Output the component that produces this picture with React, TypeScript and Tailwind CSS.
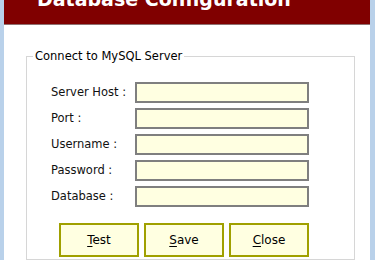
import { useState } from "react";

const fields = [
  { key: "host", label: "Server Host :" },
  { key: "port", label: "Port :" },
  { key: "user", label: "Username :" },
  { key: "pass", label: "Password :" },
  { key: "db", label: "Database :" },
];

const buttons = [
  { key: "test", first: "T", rest: "est" },
  { key: "save", first: "S", rest: "ave" },
  { key: "close", first: "C", rest: "lose" },
];

export default function App() {
  const [values, setValues] = useState<Record<string, string>>({});

  return (
    <div className="flex h-[260px] w-[375px] overflow-hidden bg-white font-['DejaVu_Sans',sans-serif]">
      <div className="w-[4px] shrink-0 bg-[#b9d1ea]" />

      <div className="flex flex-1 flex-col overflow-hidden bg-white">
        {/* header */}
        <div className="h-[25px] shrink-0 overflow-hidden border-b border-[#8f7070] bg-[#800000]">
          <h1 className="ml-[33px] mt-[-10px] whitespace-nowrap text-[19px] font-bold leading-none text-white">
            Database Configuration
          </h1>
        </div>

        {/* form */}
        <fieldset className="ml-[22px] mt-[24px] w-[329px] flex-1 border border-[#d6d6d6] p-0">
          <legend className="ml-[6px] px-[2px] text-[11.5px] leading-[14px] text-black">
            Connect to MySQL Server
          </legend>

          <div className="pl-[24px] pt-[19px]">
            <div className="grid grid-cols-[84px_174px] items-center gap-y-[5px]">
              {fields.map((f) => (
                <div key={f.key} className="contents">
                  <label className="text-[11.5px] text-[#111]">{f.label}</label>
                  <input
                    className="h-[21px] border-2 border-[#7f7f7f] bg-[#ffffe1] px-1 text-[11.5px] outline-none"
                    value={values[f.key] || ""}
                    type={f.key === "pass" ? "password" : "text"}
                    onChange={(e) => setValues({ ...values, [f.key]: e.target.value })}
                  />
                </div>
              ))}
            </div>

            <div className="ml-[8px] mt-[16px] flex gap-[5px]">
              {buttons.map((b) => (
                <button
                  key={b.key}
                  className="h-[34px] w-[80px] border-2 border-[#a0a000] bg-[#ffffe1] text-[12px] text-black"
                >
                  <span className="underline underline-offset-2">{b.first}</span>
                  {b.rest}
                </button>
              ))}
            </div>
          </div>
        </fieldset>
      </div>

      <div className="w-[5px] shrink-0 bg-[#b9d1ea]" />
    </div>
  );
}
